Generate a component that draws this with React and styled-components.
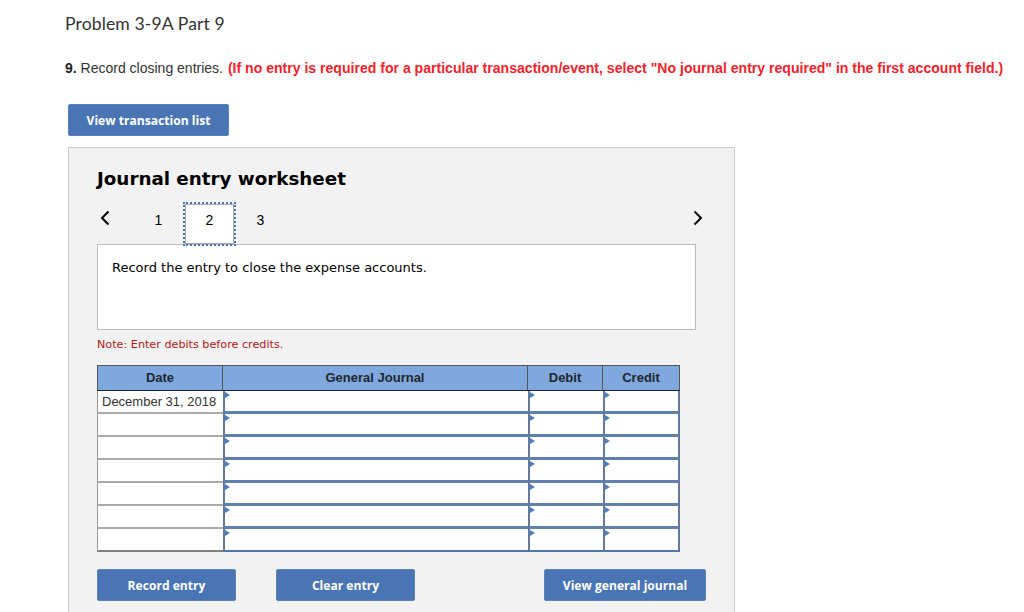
import React from 'react';
import styled, { createGlobalStyle } from 'styled-components';

const GlobalStyle = createGlobalStyle`
  html, body {
    margin: 0;
    padding: 0;
    height: 612px;
    overflow: hidden;
    background: #fff;
  }
`;

const Page = styled.div`
  padding: 14px 0 0 65px;
  width: 959px;
  height: 612px;
  box-sizing: border-box;
`;

const Title = styled.h1`
  margin: 0;
  font: 400 17.6px/20px Lato, "Open Sans", sans-serif;
  letter-spacing: 0.1px;
  color: #333;
`;

const Question = styled.p`
  margin: 25px 0 0;
  font: 400 14px/18px "Liberation Sans", Arial, sans-serif;
  color: #333;
  white-space: nowrap;
  b { color: #222; }
`;

const Warning = styled.strong`
  margin-left: 1px;
  font-size: 14.07px;
  color: #f5222a;
`;

const Button = styled.button`
  width: ${p => p.$width}px;
  height: 32px;
  padding: 2px 0 0;
  border: 1px solid #5a82bb;
  border-radius: 2px;
  background: #4a75b4;
  color: #fff;
  font: 700 12.1px/1 "Open Sans", sans-serif;
`;

const TopAction = styled.div`
  margin: 27px 0 0 3px;
  display: flex;
`;

const Panel = styled.section`
  margin: 11px 0 0 3px;
  width: 667px;
  height: 465px;
  box-sizing: border-box;
  padding: 21px 28px 0;
  background: #f2f2f2;
  border: 1px solid #ccc;
  border-bottom: 0;
  font-family: "DejaVu Sans", Verdana, sans-serif;
  color: #000;
`;

const Heading = styled.h2`
  margin: 0;
  font: 700 18.3px/20px "DejaVu Sans", Verdana, sans-serif;
  color: #000;
`;

const TabBar = styled.div`
  margin-top: 14px;
  width: 611px;
  height: 43px;
  display: flex;
`;

const Arrow = styled.button`
  width: ${p => p.$wide}px;
  height: 43px;
  padding: 7px 0 0 ${p => p.$left}px;
  display: flex;
  align-items: flex-start;
  border: 0;
  background: none;
  svg { display: block; }
`;

const Tab = styled.div`
  position: relative;
  z-index: 1;
  width: 51px;
  height: 42px;
  box-sizing: border-box;
  display: flex;
  align-items: center;
  justify-content: center;
  font: 400 14px/1 "Liberation Sans", Arial, sans-serif;
  padding-bottom: 8px;
  ${p => p.$active && `
    width: 49px;
    height: 40px;
    margin: 1px;
    background: #fff;
    border: 1px solid #aaa;
    outline: 2px dotted #4a75b4;
  `}
`;

const Spacer = styled.div`
  flex: 1;
`;

const Prompt = styled.div`
  margin-top: -2px;
  width: 599px;
  height: 86px;
  box-sizing: border-box;
  padding: 14px 14px 0;
  background: #fff;
  border: 1px solid #bbb;
  font-size: 13px;
  line-height: 18px;
`;

const Note = styled.p`
  margin: 8px 0 0;
  font-size: 11.2px;
  line-height: 14px;
  color: #b51818;
`;

const Journal = styled.div`
  margin-top: 13px;
  width: 583px;
  font-family: "Liberation Sans", Arial, sans-serif;
  background: #fff;
`;

const Row = styled.div`
  display: grid;
  grid-template-columns: 126px 305px 75px 77px;
  height: ${p => (p.$head ? 26 : 23)}px;
`;

const HeadCell = styled.div`
  display: flex;
  align-items: center;
  justify-content: center;
  box-sizing: border-box;
  padding-bottom: 1px;
  background: #7fa9de;
  border: 1px solid #555;
  border-left-width: ${p => (p.$first ? 1 : 0)}px;
  border-bottom: 1px solid #222;
  font-size: 13px;
  font-weight: 700;
  color: #22262e;
`;

const DateCell = styled.div`
  box-sizing: border-box;
  padding: 2px 0 0 4px;
  border-left: 1px solid #999;
  border-bottom: 2px solid ${p => (p.$last ? '#808080' : '#aaa')};
  font-size: 13px;
  line-height: 18px;
  color: #333;
  white-space: nowrap;
`;

const EntryCell = styled.div`
  position: relative;
  box-sizing: border-box;
  border-left: 2px solid #64799a;
  border-bottom: 3px solid ${p => (p.$last ? '#4f76ad' : '#5f7fad')};
  ${p => p.$end && 'border-right: 2px solid #64799a;'}
  ${p => p.$last && 'border-bottom-width: 2px;'}
  &::before {
    content: '';
    position: absolute;
    left: 0;
    top: 1px;
    border-left: 5px solid #4a7ec0;
    border-top: 3px solid transparent;
    border-bottom: 3px solid transparent;
  }
`;

const Actions = styled.div`
  margin-top: 17px;
  width: 609px;
  display: flex;
`;

const ActionSlot = styled.div`
  margin-right: ${p => p.$gap}px;
`;

const rows = ['December 31, 2018', '', '', '', '', '', ''];

const Chevron = ({ dir }) => (
  <svg width="10" height="16" viewBox="0 0 10 16" fill="none" stroke="#000" strokeWidth="2">
    <path d={dir === 'left' ? 'M8.5 1.5 L2 8 L8.5 14.5' : 'M1.5 1.5 L8 8 L1.5 14.5'} />
  </svg>
);

const App = () => (
  <>
    <GlobalStyle />
    <Page>
      <Title>Problem 3-9A Part 9</Title>
      <Question>
        <b>9.</b> Record closing entries.{' '}
        <Warning>(If no entry is required for a particular transaction/event, select "No journal entry required" in the first account field.)</Warning>
      </Question>
      <TopAction>
        <Button $width={161}>View transaction list</Button>
      </TopAction>
      <Panel>
        <Heading>Journal entry worksheet</Heading>
        <TabBar>
          <Arrow $wide={36} $left={3}><Chevron dir="left" /></Arrow>
          <Tab>1</Tab>
          <Tab $active>2</Tab>
          <Tab>3</Tab>
          <Spacer />
          <Arrow $wide={30} $left={15}><Chevron dir="right" /></Arrow>
        </TabBar>
        <Prompt>Record the entry to close the expense accounts.</Prompt>
        <Note>Note: Enter debits before credits.</Note>
        <Journal>
          <Row $head>
            <HeadCell $first>Date</HeadCell>
            <HeadCell>General Journal</HeadCell>
            <HeadCell>Debit</HeadCell>
            <HeadCell>Credit</HeadCell>
          </Row>
          {rows.map((date, i) => {
            const last = i === rows.length - 1;
            return (
              <Row key={i}>
                <DateCell $last={last}>{date}</DateCell>
                <EntryCell $last={last} />
                <EntryCell $last={last} />
                <EntryCell $last={last} $end />
              </Row>
            );
          })}
        </Journal>
        <Actions>
          <ActionSlot $gap={40}><Button $width={139}>Record entry</Button></ActionSlot>
          <ActionSlot $gap={129}><Button $width={139}>Clear entry</Button></ActionSlot>
          <ActionSlot $gap={0}><Button $width={162}>View general journal</Button></ActionSlot>
        </Actions>
      </Panel>
    </Page>
  </>
);

export default App;
